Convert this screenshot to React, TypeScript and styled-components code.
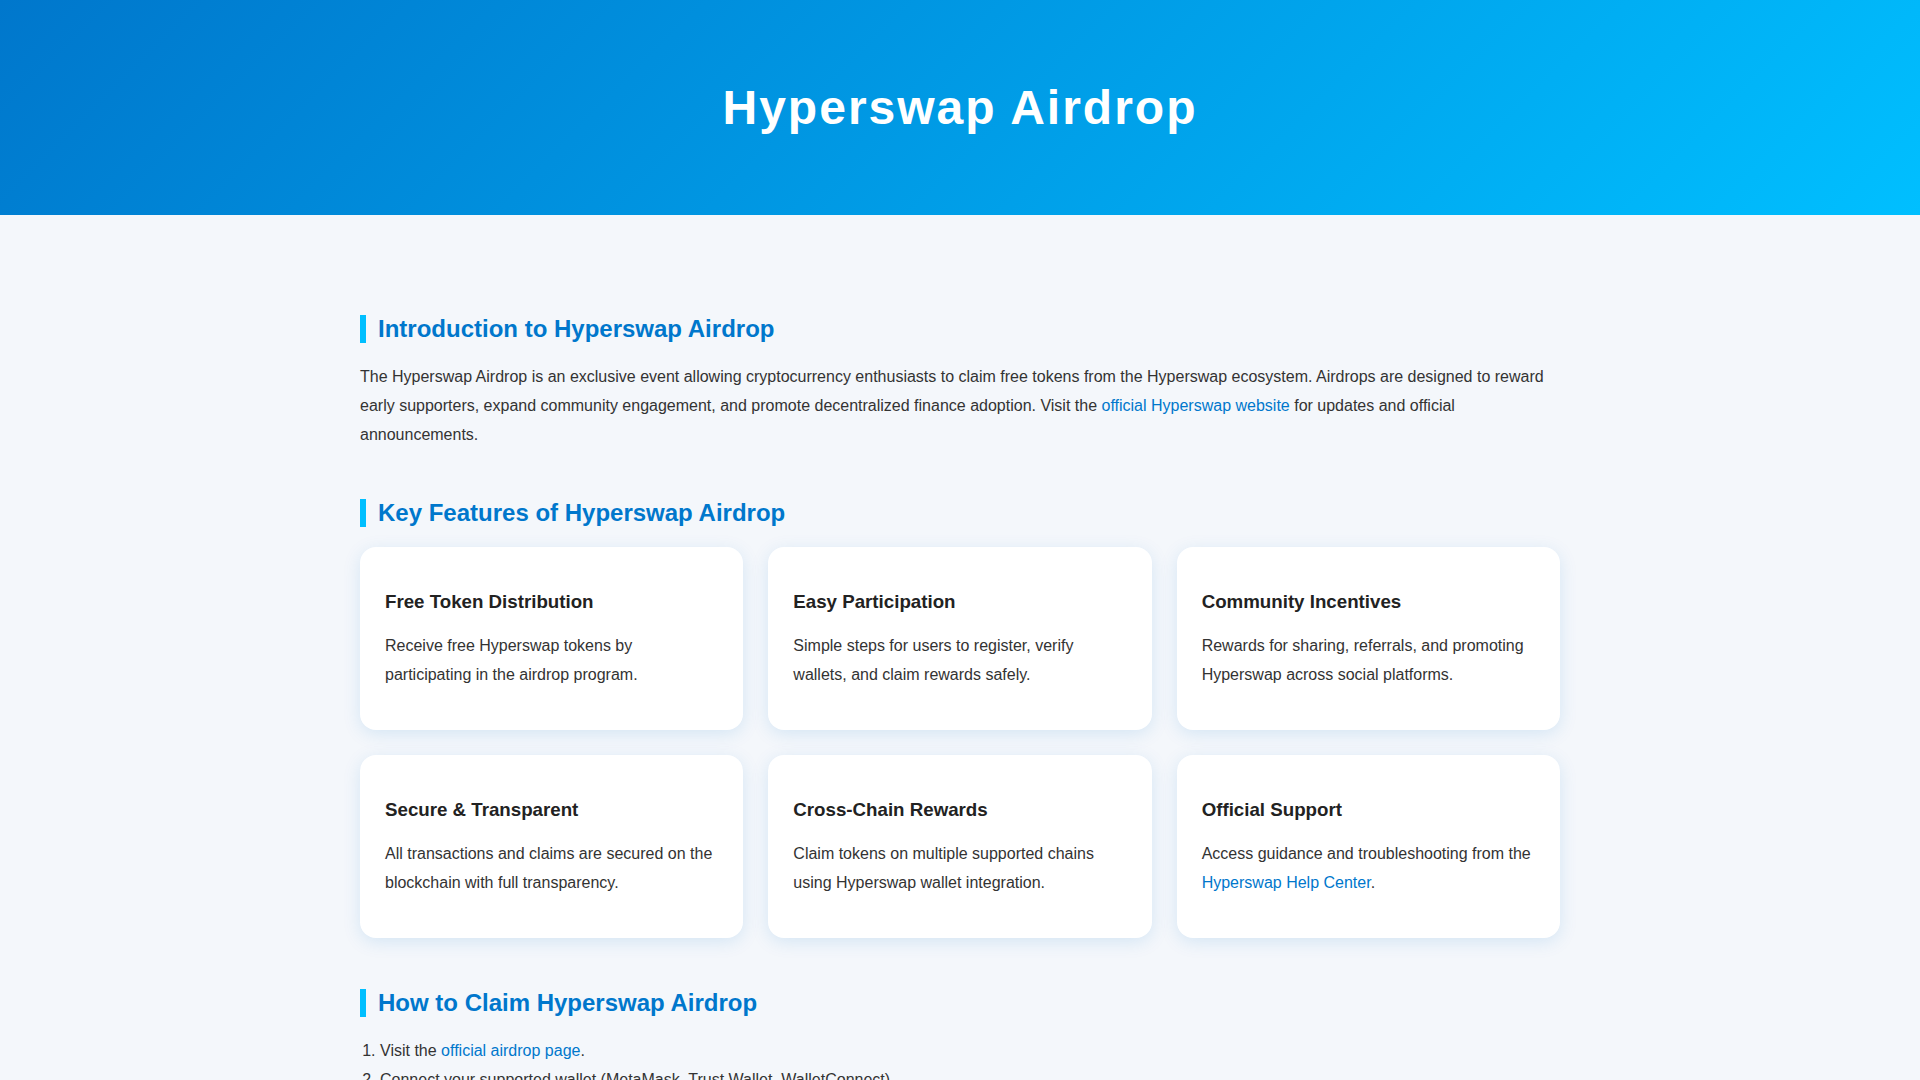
// App.tsx
import React from "react";
import styled, { createGlobalStyle } from "styled-components";

/* ─ global ─ */
const GlobalStyle = createGlobalStyle`
  * {
    box-sizing: border-box;
  }

  body {
    margin: 0;
    background-color: #f4f7fb;
    color: #333333;
    font-family: "Liberation Sans", Arial, Helvetica, sans-serif;
    font-size: 16px;
    line-height: 1.8;
  }
`;

/* ─ header ─ */
const Header = styled.header`
  background: linear-gradient(135deg, #0077cc, #00bfff);
  padding: 80px 20px;
  text-align: center;
`;

const Title = styled.h1`
  margin: 0;
  color: #ffffff;
  font-size: 48px;
  font-weight: 700;
  line-height: normal;
  letter-spacing: 2px;
`;

/* ─ layout ─ */
const Main = styled.main`
  max-width: 1200px;
  margin: 0 auto;
  padding: 100px 0 60px;
`;

const Section = styled.section<{ $gap?: number }>`
  margin-bottom: ${(p) => p.$gap ?? 50}px;
`;

const SectionTitle = styled.h2`
  margin: 0 0 20px;
  padding-left: 12px;
  border-left: 6px solid #00bfff;
  color: #0077cc;
  font-size: 24px;
  font-weight: 700;
  line-height: normal;
`;

const Text = styled.p`
  margin: 0 0 16px;
`;

const Link = styled.a`
  color: #0077cc;
  text-decoration: none;

  &:hover {
    text-decoration: underline;
  }
`;

/* ─ features ─ */
const Grid = styled.div`
  display: grid;
  grid-template-columns: repeat(3, 1fr);
  gap: 25px;
`;

const Card = styled.div`
  background-color: #ffffff;
  border-radius: 16px;
  padding: 25px;
  box-shadow: 0 4px 18px rgba(0, 119, 204, 0.13);
`;

const CardTitle = styled.h3`
  margin: 1em 0;
  color: #222222;
  font-size: 1.17em;
  font-weight: 700;
  line-height: normal;
`;

const CardText = styled.p`
  margin: 16px 0;
`;

/* ─ steps ─ */
const Steps = styled.ol`
  margin: 0;
  padding-left: 20px;
`;

const Step = styled.li`
  margin: 0;
`;

interface Feature {
    title: string;
    text: React.ReactNode;
}

const features: Feature[] = [
    {
        title: "Free Token Distribution",
        text: "Receive free Hyperswap tokens by participating in the airdrop program.",
    },
    {
        title: "Easy Participation",
        text: "Simple steps for users to register, verify wallets, and claim rewards safely.",
    },
    {
        title: "Community Incentives",
        text: "Rewards for sharing, referrals, and promoting Hyperswap across social platforms.",
    },
    {
        title: "Secure & Transparent",
        text: "All transactions and claims are secured on the blockchain with full transparency.",
    },
    {
        title: "Cross-Chain Rewards",
        text: "Claim tokens on multiple supported chains using Hyperswap wallet integration.",
    },
    {
        title: "Official Support",
        text: (
            <>
                Access guidance and troubleshooting from the{" "}
                <Link href="#">Hyperswap Help Center</Link>.
            </>
        ),
    },
];

const App: React.FC = () => {
    return (
        <>
            <GlobalStyle />
            <Header>
                <Title>Hyperswap Airdrop</Title>
            </Header>

            <Main>
                <Section>
                    <SectionTitle>Introduction to Hyperswap Airdrop</SectionTitle>
                    <Text>
                        The Hyperswap Airdrop is an exclusive event allowing cryptocurrency
                        enthusiasts to claim free tokens from the Hyperswap ecosystem. Airdrops
                        are designed to reward early supporters, expand community engagement,
                        and promote decentralized finance adoption. Visit the{" "}
                        <Link href="#">official Hyperswap website</Link> for updates and
                        official announcements.
                    </Text>
                </Section>

                <Section $gap={51}>
                    <SectionTitle>Key Features of Hyperswap Airdrop</SectionTitle>
                    <Grid>
                        {features.map((f) => (
                            <Card key={f.title}>
                                <CardTitle>{f.title}</CardTitle>
                                <CardText>{f.text}</CardText>
                            </Card>
                        ))}
                    </Grid>
                </Section>

                <Section>
                    <SectionTitle>How to Claim Hyperswap Airdrop</SectionTitle>
                    <Steps>
                        <Step>
                            Visit the <Link href="#">official airdrop page</Link>.
                        </Step>
                        <Step>
                            Connect your supported wallet (MetaMask, Trust Wallet, WalletConnect).
                        </Step>
                        <Step>Complete the required verification and social tasks.</Step>
                        <Step>Confirm your eligibility and submit your claim.</Step>
                        <Step>Receive your Hyperswap tokens directly in your wallet.</Step>
                    </Steps>
                </Section>
            </Main>
        </>
    );
};

export default App;
